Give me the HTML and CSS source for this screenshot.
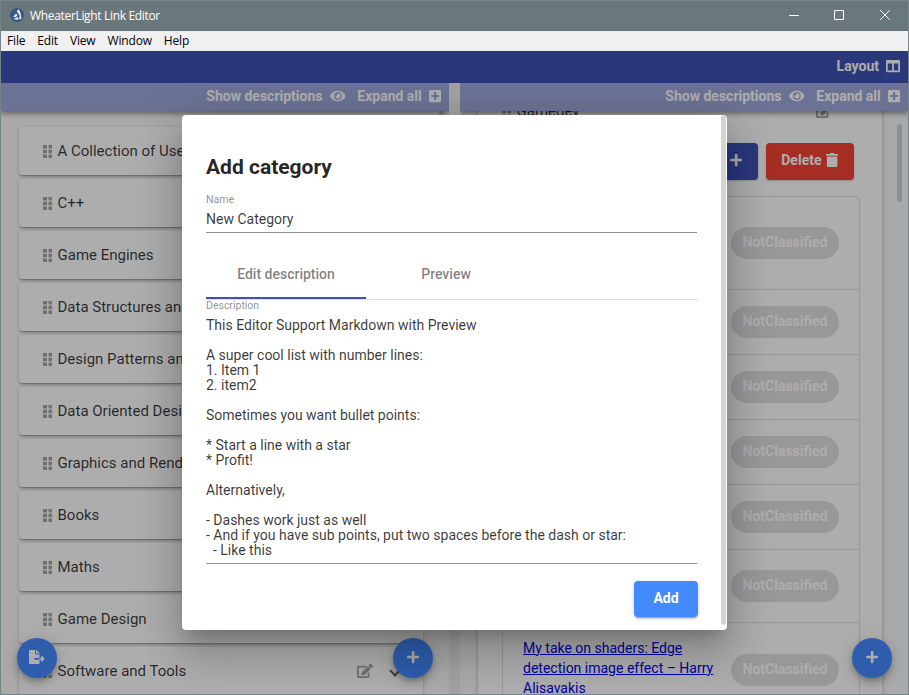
FILE: index.html
```html
<!DOCTYPE html>
<html lang="en">
<head>
<meta charset="utf-8">
<title>WheaterLight Link Editor</title>
<link rel="stylesheet" href="styles.css">
</head>
<body>
<svg class="defs" width="0" height="0">
  <symbol id="eye" viewBox="0 0 576 512"><path d="M572.52 241.4C518.29 135.59 410.93 64 288 64S57.68 135.64 3.48 241.41a32.35 32.35 0 0 0 0 29.19C57.71 376.41 165.07 448 288 448s230.32-71.64 284.52-177.41a32.35 32.35 0 0 0 0-29.19zM288 400a144 144 0 1 1 144-144 143.93 143.93 0 0 1-144 144zm0-240a95.31 95.31 0 0 0-25.31 3.79 47.85 47.85 0 0 1-66.9 66.9A95.78 95.78 0 1 0 288 160z"/></symbol>
  <symbol id="plus-square" viewBox="0 0 448 512"><path d="M400 32H48C21.5 32 0 53.5 0 80v352c0 26.5 21.5 48 48 48h352c26.5 0 48-21.5 48-48V80c0-26.5-21.5-48-48-48zm-32 252c0 6.6-5.4 12-12 12h-92v92c0 6.6-5.4 12-12 12h-56c-6.6 0-12-5.4-12-12v-92H92c-6.6 0-12-5.4-12-12v-56c0-6.6 5.4-12 12-12h92v-92c0-6.6 5.4-12 12-12h56c6.6 0 12 5.4 12 12v92h92c6.6 0 12 5.4 12 12v56z"/></symbol>
  <symbol id="columns" viewBox="0 0 512 512"><path d="M464 32H48C21.49 32 0 53.49 0 80v352c0 26.51 21.49 48 48 48h416c26.51 0 48-21.49 48-48V80c0-26.51-21.49-48-48-48zM224 416H64V160h160v256zm224 0H288V160h160v256z"/></symbol>
  <symbol id="plus" viewBox="0 0 448 512"><path d="M416 208H272V64c0-17.67-14.33-32-32-32h-32c-17.67 0-32 14.33-32 32v144H32c-17.67 0-32 14.33-32 32v32c0 17.67 14.33 32 32 32h144v144c0 17.67 14.33 32 32 32h32c17.67 0 32-14.33 32-32V304h144c17.67 0 32-14.33 32-32v-32c0-17.67-14.33-32-32-32z"/></symbol>
  <symbol id="trash" viewBox="0 0 448 512"><path d="M32 464a48 48 0 0 0 48 48h288a48 48 0 0 0 48-48V128H32zM432 32H312l-9.4-18.7A24 24 0 0 0 281.1 0H166.8a23.72 23.72 0 0 0-21.4 13.3L136 32H16A16 16 0 0 0 0 48v32a16 16 0 0 0 16 16h416a16 16 0 0 0 16-16V48a16 16 0 0 0-16-16z"/></symbol>
  <symbol id="edit" viewBox="0 0 576 512"><path d="M402.6 83.2l90.2 90.2c3.8 3.8 3.8 10 0 13.8L274.4 405.6l-92.8 10.3c-12.4 1.4-22.9-9.1-21.5-21.5l10.3-92.8L388.8 83.2c3.8-3.8 10-3.8 13.8 0zm162-22.9l-48.8-48.8c-15.2-15.2-39.9-15.2-55.2 0l-35.4 35.4c-3.8 3.8-3.8 10 0 13.8l90.2 90.2c3.8 3.8 10 3.8 13.8 0l35.4-35.4c15.2-15.3 15.2-40 0-55.2zM384 346.2V448H64V128h229.8c3.2 0 6.2-1.3 8.5-3.5l40-40c7.6-7.6 2.2-20.5-8.5-20.5H48C21.5 64 0 85.5 0 112v352c0 26.5 21.5 48 48 48h352c26.5 0 48-21.5 48-48V306.2c0-10.7-12.9-16-20.5-8.5l-40 40c-2.2 2.3-3.5 5.3-3.5 8.5z"/></symbol>
  <symbol id="export" viewBox="0 0 576 512"><path d="M384 121.9c0-6.3-2.5-12.4-7-16.9L279.1 7c-4.5-4.5-10.6-7-17-7H256v128h128zM571 308l-95.7-96.4c-10.1-10.1-27.4-3-27.4 11.3V288h-64v64h64v65.2c0 14.3 17.3 21.4 27.4 11.3L571 332c6.6-6.6 6.6-17.4 0-24zm-379 28v-32c0-8.8 7.2-16 16-16h176V160H248c-13.2 0-24-10.8-24-24V0H24C10.7 0 0 10.7 0 24v464c0 13.3 10.7 24 24 24h336c13.3 0 24-10.7 24-24V352H208c-8.8 0-16-7.2-16-16z"/></symbol>
  <symbol id="grip" viewBox="0 0 9 13"><path d="M0 0h4v3.500H0zM5.500 0h3.500v3.500H5.500zM0 4.800h4v3.500H0zM5.500 4.800h3.500v3.500H5.500zM0 9.500h4V13H0zM5.500 9.500h3.500V13H5.500z"/></symbol>
</svg>
<div class="window">
  <header class="titlebar">
    <svg class="logo" viewBox="0 0 14 14"><circle cx="7" cy="7" r="7" fill="#355782"/><path d="M6.800 3.500 8.200 1.200l1.400 1.600 1 2.400.9 5.600-2.200.6.2-4.200zM2.600 8.200l2.200-1 1.200-2 1.500 2.200-2 1.800zM3.400 10l2.200.2L7.200 9l1.400 1-.4 1.800-3.200-.3z" fill="#e9edf2"/></svg>
    <span class="app-title">WheaterLight Link Editor</span>
    <svg class="controls" width="102" height="12" viewBox="0 0 102 12"><path d="M0 6.500h10M45.500 1.500h9v9h-9zM91 1l10 10M101 1 91 11" fill="none" stroke="#fff"/></svg>
  </header>
  <nav class="menu"><span>File</span><span>Edit</span><span>View</span><span>Window</span><span>Help</span></nav>
  <main class="app">
    <div class="toolbar">Layout <svg class="ic w14"><use href="#columns"/></svg></div>
    <div class="panes">
      <section class="pane">
        <div class="subbar"><span>Show descriptions</span><svg class="ic w16"><use href="#eye"/></svg><span class="expand">Expand all</span><svg class="ic w12"><use href="#plus-square"/></svg></div>
        <div class="cards">
          <div class="card"><svg class="grip"><use href="#grip"/></svg>A Collection of Useful Links</div>
          <div class="card"><svg class="grip"><use href="#grip"/></svg>C++</div>
          <div class="card"><svg class="grip"><use href="#grip"/></svg>Game Engines</div>
          <div class="card"><svg class="grip"><use href="#grip"/></svg>Data Structures and Algorithms</div>
          <div class="card"><svg class="grip"><use href="#grip"/></svg>Design Patterns and Architecture</div>
          <div class="card"><svg class="grip"><use href="#grip"/></svg>Data Oriented Design</div>
          <div class="card"><svg class="grip"><use href="#grip"/></svg>Graphics and Rendering</div>
          <div class="card"><svg class="grip"><use href="#grip"/></svg>Books</div>
          <div class="card"><svg class="grip"><use href="#grip"/></svg>Maths</div>
          <div class="card"><svg class="grip"><use href="#grip"/></svg>Game Design</div>
          <div class="card"><svg class="grip"><use href="#grip"/></svg>Software and Tools<svg class="edit"><use href="#edit"/></svg><i class="chevron"></i></div>
        </div>
        <i class="scroll scroll-left"></i>
        <button class="fab fab-export"><svg class="ic w16"><use href="#export"/></svg></button>
        <button class="fab fab-add"><svg class="ic w12"><use href="#plus"/></svg></button>
      </section>
      <div class="gutter"></div>
      <section class="pane">
        <div class="subbar"><span>Show descriptions</span><svg class="ic w16"><use href="#eye"/></svg><span class="expand">Expand all</span><svg class="ic w12"><use href="#plus-square"/></svg></div>
        <div class="panel">
          <div class="panel-head"><svg class="grip"><use href="#grip"/></svg>Gamedev<svg class="edit"><use href="#edit"/></svg><i class="chevron up"></i></div>
          <div class="actions"><button class="btn blue"><svg class="ic w12"><use href="#plus"/></svg></button><button class="btn red">Delete <svg class="ic w12"><use href="#trash"/></svg></button></div>
          <div class="links">
            <div class="row tall"><b class="pill">NotClassified</b></div>
            <div class="row"><b class="pill">NotClassified</b></div>
            <div class="row"><b class="pill">NotClassified</b></div>
            <div class="row"><b class="pill">NotClassified</b></div>
            <div class="row"><b class="pill">NotClassified</b></div>
            <div class="row mid"><b class="pill">NotClassified</b></div>
            <div class="row tall"><a href="#">My take on shaders: Edge detection image effect – Harry Alisavakis</a><b class="pill">NotClassified</b></div>
          </div>
        </div>
        <i class="scroll scroll-right"></i>
        <button class="fab fab-add"><svg class="ic w12"><use href="#plus"/></svg></button>
      </section>
    </div>
    <div class="backdrop">
      <div class="dialog">
        <h2>Add category</h2>
        <label class="label">Name</label>
        <div class="value">New Category</div>
        <div class="tabs"><span class="tab active">Edit description</span><span class="tab">Preview</span></div>
        <label class="label desc">Description</label>
        <div class="text">This Editor Support Markdown with Preview

A super cool list with number lines:
1. Item 1
2. item2

Sometimes you want bullet points:

* Start a line with a star
* Profit!

Alternatively,

- Dashes work just as well
- And if you have sub points, put two spaces before the dash or star:
  - Like this</div>
        <button class="btn add">Add</button>
        <i class="scroll scroll-dialog"></i>
      </div>
    </div>
  </main>
</div>
</body>
</html>
```
FILE: styles.css
```css
* { box-sizing: border-box; }
body { margin: 0; font: 14px Roboto, sans-serif; overflow: hidden; }
.defs { display: block; position: absolute; }
.window { width: 909px; height: 695px; border: 1px solid #748488; display: flex; flex-direction: column; overflow: hidden; }
.titlebar { height: 30px; flex: none; background: #6a787c; display: flex; align-items: center; padding: 0 17px 0 9px; color: #fff; font: 12px "Open Sans", sans-serif; }
.logo { width: 14px; height: 14px; margin-top: -2px; }
.app-title { margin: -1px 0 0 6px; flex: 1; letter-spacing: -0.33px; }
.controls { margin-top: -2px; }
.menu { height: 20px; flex: none; background: #f0f0f0; display: flex; gap: 12px; padding-left: 6px; font: 12px/20px "Open Sans", sans-serif; letter-spacing: -.17px; color: #000; }
.app { height: 643px; flex: none; position: relative; overflow: hidden; background: #fafafa; }
.toolbar { height: 32px; background: #3f51b5; color: #fff; font-weight: 700; display: flex; align-items: center; justify-content: flex-end; gap: 7px; padding: 0 8px 2px 0; }
.ic { height: 14px; fill: currentColor; flex: none; display: block; }
.w12 { width: 12.25px; } .w14 { width: 14px; } .w16 { width: 15.75px; }
.panes { display: flex; height: 611px; }
.pane { width: 448px; position: relative; overflow: hidden; background: #fafafa; }
.gutter { width: 11px; background: #eee; }
.subbar { height: 28px; position: relative; z-index: 2; background: #9fa8da; color: #fff; font-weight: 700; display: flex; align-items: center; justify-content: flex-end; gap: 7px; padding: 0 8px 2px 0; box-shadow: 0 3px 5px rgba(0,0,0,.4); }
.expand { margin-left: 5px; }
.cards { padding: 16px 26px 0 18px; display: flex; flex-direction: column; gap: 4px; }
.card { height: 48px; flex: none; background: #fff; border-radius: 4px; box-shadow: 0 3px 1px -2px rgba(0,0,0,.2), 0 2px 2px rgba(0,0,0,.14), 0 1px 5px rgba(0,0,0,.12); display: flex; align-items: center; padding: 0 23px 0 24px; font-size: 15px; color: rgba(0,0,0,.78); white-space: nowrap; }
.grip { width: 9px; height: 13px; margin-right: 5.5px; fill: #a4a4a4; flex: none; }
.edit { width: 16px; height: 14px; margin-left: auto; fill: #a4a4a4; }
.chevron { width: 8px; height: 8px; border: solid #666; border-width: 0 2px 2px 0; transform: rotate(45deg); margin: -1px 1px 0 18px; }
.chevron.up { transform: rotate(225deg); visibility: hidden; }
.scroll { position: absolute; width: 5px; background: #d3d3d3; border-radius: 3px; }
.scroll-left { left: 438px; top: 28px; height: 350px; }
.scroll-right { left: 437px; top: 41px; height: 78px; }
.fab { position: absolute; top: 555px; width: 40px; height: 40px; border: 0; padding: 0; border-radius: 50%; background: #448aff; color: #fff; display: grid; place-items: center; box-shadow: 0 3px 5px -1px rgba(0,0,0,.2), 0 6px 10px rgba(0,0,0,.14), 0 1px 18px rgba(0,0,0,.12); }
.fab .ic { margin-top: -2px; }
.fab-export { left: 16px; }
.fab-add { left: 392px; }
.panel { margin: -24px 26px 0 18px; padding-bottom: 30px; background: #fff; box-shadow: 0 1px 5px rgba(0,0,0,.2), 0 2px 2px rgba(0,0,0,.14); }
.panel-head { height: 48px; display: flex; align-items: center; padding: 0 23px 0 24px; font-size: 15px; color: rgba(0,0,0,.78); }
.actions { display: flex; justify-content: flex-end; gap: 8px; padding: 8px 28px 0; }
.btn { height: 37px; border: 0; border-radius: 4px; color: #fff; font: 700 14px Roboto, sans-serif; display: flex; align-items: center; justify-content: center; gap: 4px; padding: 0 16px 3px; box-shadow: 0 1px 2px rgba(0,0,0,.2); }
.blue { background: #3f51b5; } .red { background: #f44336; width: 88px; padding-right: 17px; }
.links { margin: 16px 22px 0 24px; border: 1px solid #e0e0e0; border-radius: 4px; }
.row { height: 65px; display: flex; align-items: center; justify-content: flex-end; padding: 0 20px; border-bottom: 1px solid #e0e0e0; }
.row.tall { height: 93px; } .row.mid { height: 73px; } .row:last-child { border: 0; }
.row a { width: 200px; margin: -4px auto 0 0; line-height: 20px; color: #00e; }
.pill { width: 108px; height: 32px; flex: none; border-radius: 16px; background: #e0e0e0; color: #fff; text-align: center; line-height: 30px; }
.backdrop { position: absolute; inset: 0; z-index: 5; background: rgba(0,0,0,.32); }
.dialog { position: absolute; left: 181px; top: 64px; width: 545px; height: 515px; padding: 0 30px 0 24px; background: #fff; border-radius: 4px; color: rgba(0,0,0,.78); box-shadow: 0 11px 15px -7px rgba(0,0,0,.2), 0 24px 38px 3px rgba(0,0,0,.14), 0 9px 46px 8px rgba(0,0,0,.12); }
h2 { font-size: 21px; line-height: 32px; margin: 36px 0 9px; color: rgba(0,0,0,.87); }
.label { display: block; font-size: 10.5px; line-height: 16px; color: rgba(0,0,0,.46); }
.value { height: 25px; line-height: 23px; border-bottom: 1px solid #949494; }
.tabs { margin: 17px -1px 0 0; display: flex; height: 50px; border-bottom: 1px solid #e0e0e0; }
.tab { width: 160px; height: 49px; line-height: 48px; text-align: center; font-weight: 500; color: rgba(0,0,0,.5); }
.tab.active { border-bottom: 2px solid #3f51b5; }
.label.desc { line-height: 12px; }
.text { white-space: pre-wrap; line-height: 15px; padding-top: 6px; height: 252px; border-bottom: 1px solid #949494; }
.add { width: 64px; height: 36px; padding-bottom: 2px; background: #448aff; margin: 17px -1px 0 auto; box-shadow: 0 3px 1px -2px rgba(0,0,0,.2), 0 2px 2px rgba(0,0,0,.14), 0 1px 5px rgba(0,0,0,.12); }
.scroll-dialog { right: 1px; top: 0; height: 510px; }
```
